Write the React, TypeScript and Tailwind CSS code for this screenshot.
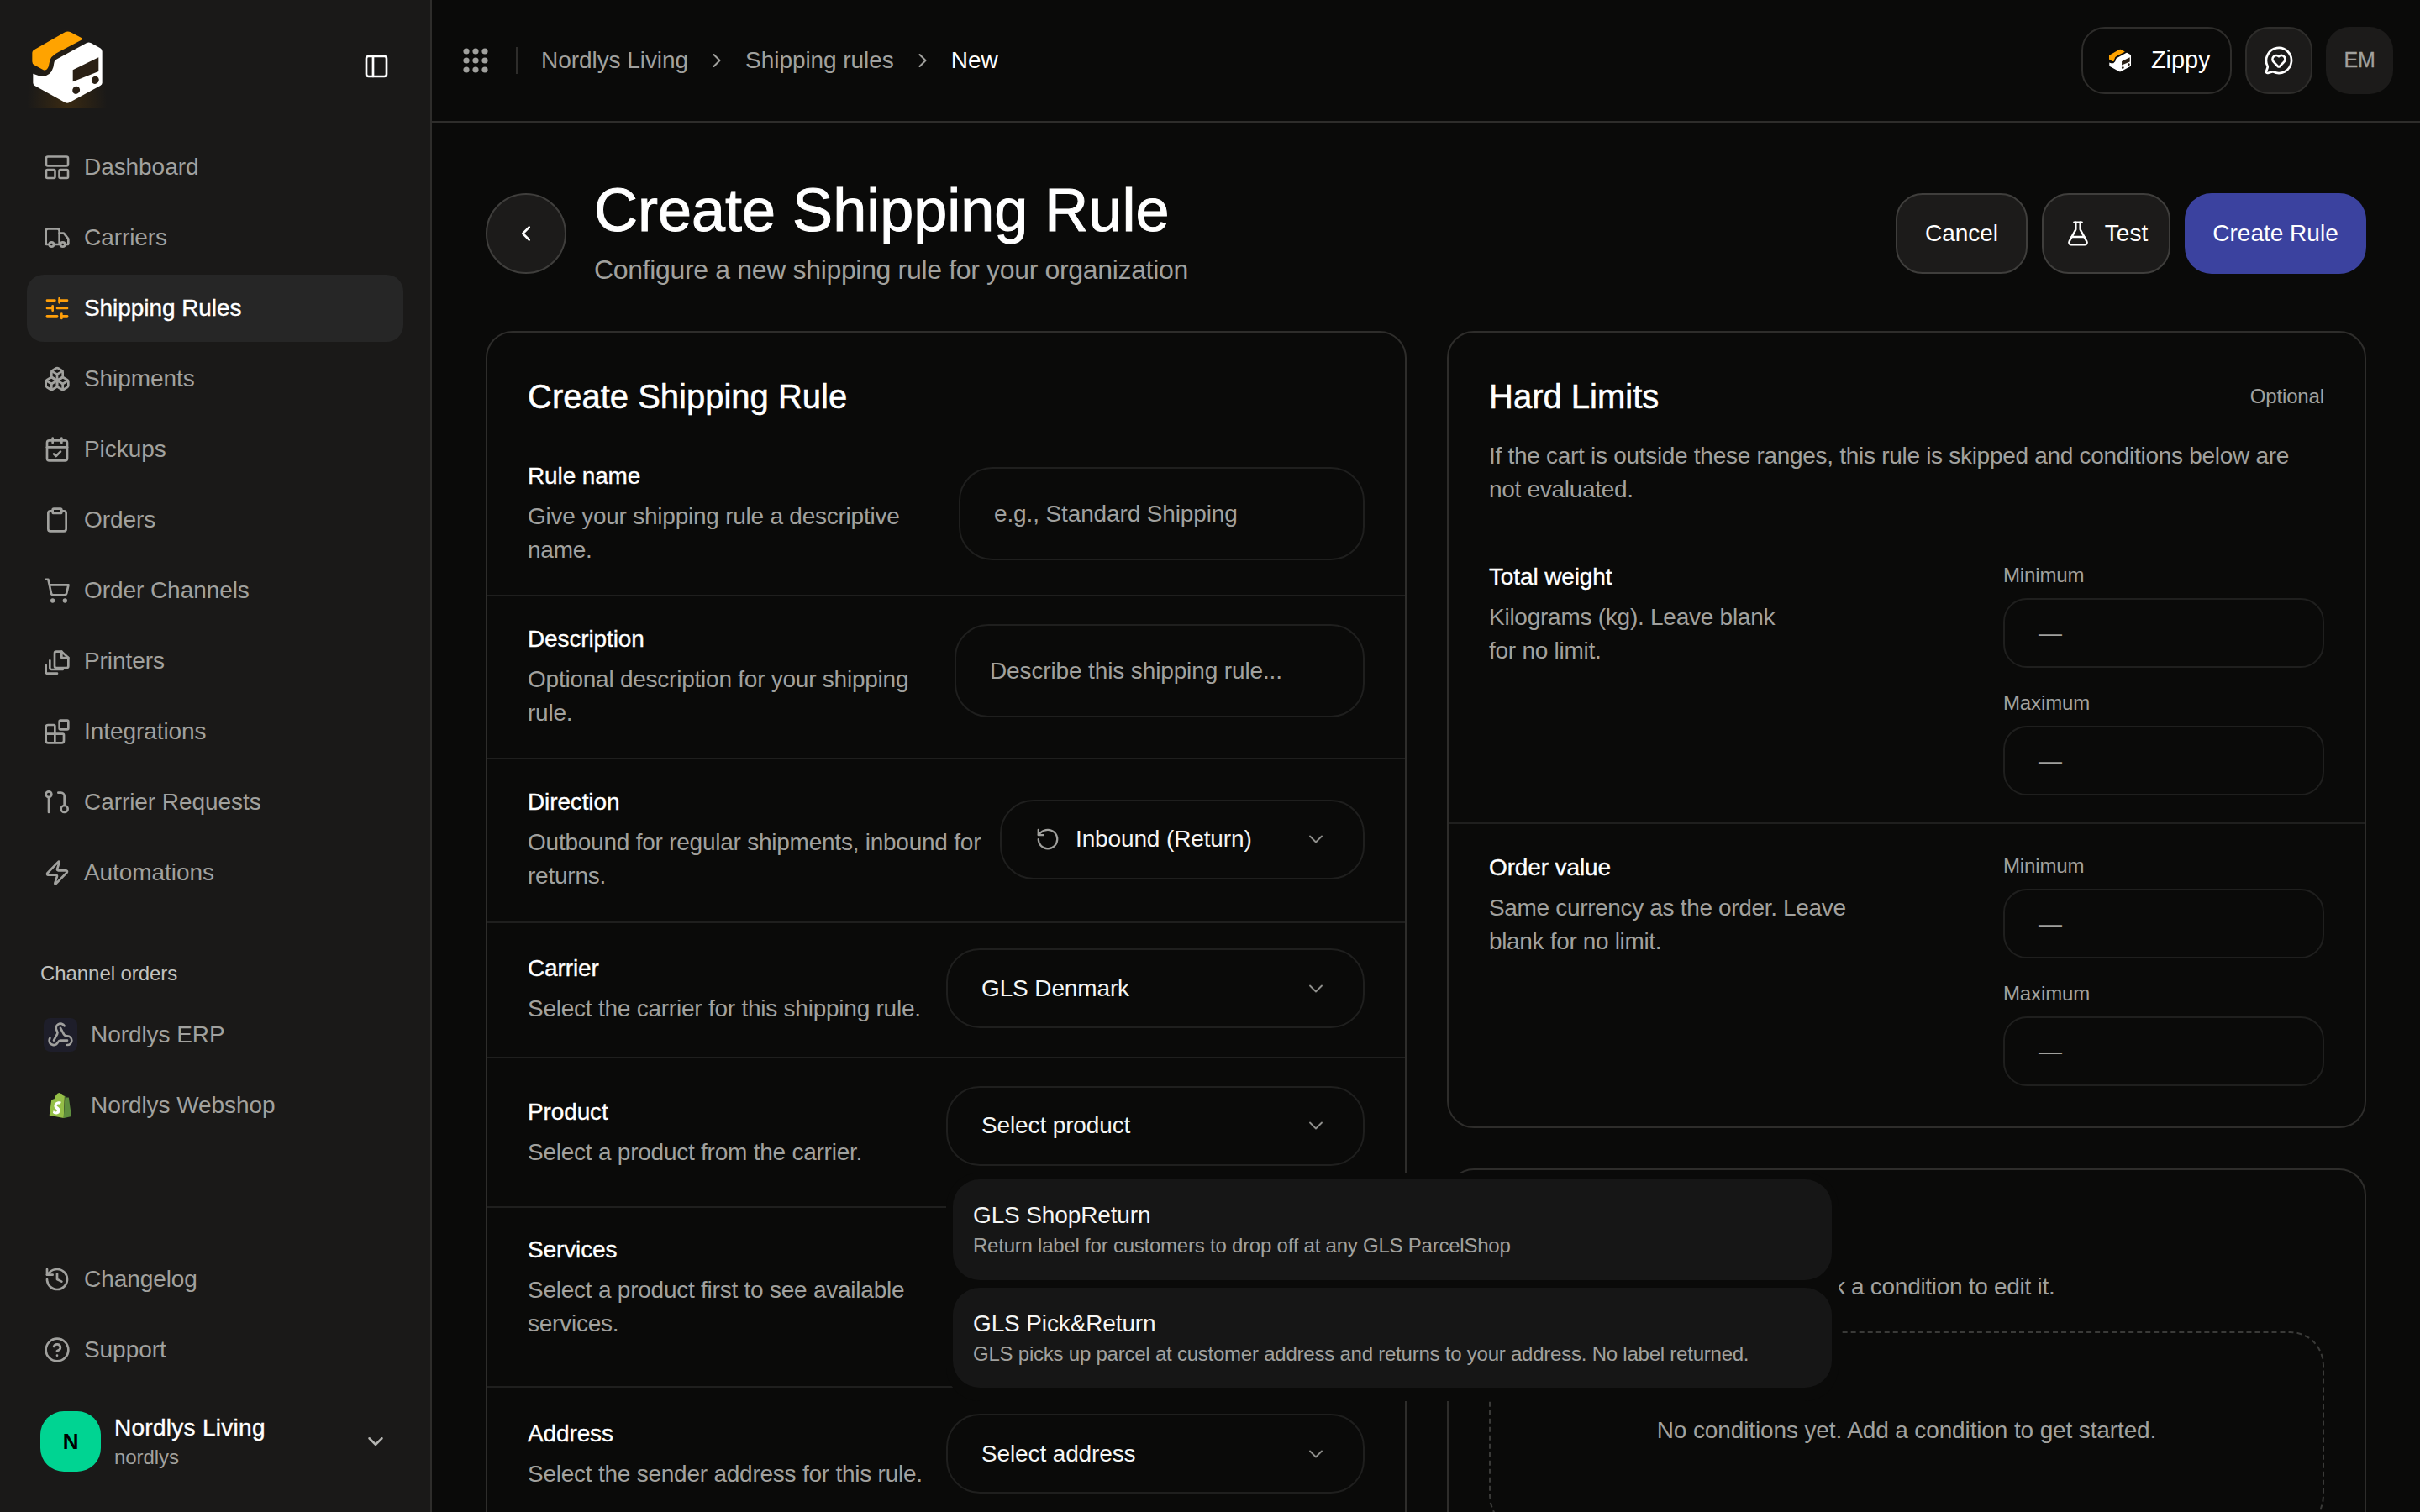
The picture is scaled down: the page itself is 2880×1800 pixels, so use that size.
import React from "react";
import {
  Truck, SlidersHorizontal, Boxes, CalendarCheck, Clipboard, ShoppingCart, Blocks, Zap,
  History, CircleHelp, ChevronDown, ChevronRight, ChevronLeft, PanelLeft, RotateCcw, FlaskConical,
  MessageCircleHeart, Webhook,
} from "lucide-react";

const Logo = ({ className }: { className: string }) => (
  <svg viewBox="36 36 288 288" className={className}>
    <path d="M62 118 L172 55 Q182 50 192 55 L232 76 Q236 80 230 83 L150 125 Q118 140 116 165 Q112 195 95 190 L62 172 Q55 168 55 160 L55 128 Q55 122 62 118 Z" fill="#ffa300" />
    <path d="M58 203 Q85 215 105 210 Q130 200 133 165 Q134 155 145 150 L250 93 Q257 90 264 93 L298 112 Q305 116 305 124 L305 236 Q305 242 298 246 L188 306 Q180 310 172 306 L64 246 Q58 242 58 236 Z" fill="#fff" />
    <path d="M200 190 L292 145 L292 195 L200 232 Z" fill="#2a2015" />
    <ellipse cx="212" cy="262" rx="13" ry="14" fill="#2a2015" transform="rotate(35 212 262)" />
    <ellipse cx="280" cy="226" rx="13" ry="14" fill="#2a2015" transform="rotate(35 280 226)" />
  </svg>
);

const DashIcon = () => (
  <svg viewBox="0 0 32 32" className="w-8 h-8" fill="none" stroke="currentColor" strokeWidth="2.6" strokeLinejoin="round">
    <rect x="3" y="3.5" width="26" height="11" rx="2" />
    <rect x="3" y="19" width="10.5" height="10" rx="1.5" />
    <rect x="18.5" y="19" width="10.5" height="10" rx="1.5" />
  </svg>
);

const ReqIcon = () => (
  <svg viewBox="0 0 24 24" className="w-8 h-8" fill="none" stroke="currentColor" strokeWidth="2" strokeLinecap="round" strokeLinejoin="round">
    <circle cx="4.5" cy="5" r="2.5" />
    <path d="M4.5 7.5V21" />
    <path d="M13 3.5h2.5a3 3 0 0 1 3 3V15" />
    <circle cx="18.5" cy="18" r="3" />
  </svg>
);

const PrinterIcon = () => (
  <svg viewBox="0 0 24 24" className="w-8 h-8" fill="none" stroke="currentColor" strokeWidth="2" strokeLinecap="round" strokeLinejoin="round">
    <path d="M9.75 5a1.5 1.5 0 0 1 1.5-1.5H16l6 5.5v7.5a1.5 1.5 0 0 1-1.5 1.5h-9.25a1.5 1.5 0 0 1-1.5-1.5Z" />
    <path d="M16 3.5V9h6" />
    <path d="M5.5 11.5V18A1.5 1.5 0 0 0 7 19.5h10" />
    <path d="M2 15.5v6A1.5 1.5 0 0 0 3.5 23H12" />
  </svg>
);

const Shopify = () => (
  <svg viewBox="0 0 24 24" className="w-[30px] h-[30px]">
    <path d="M15.009 24 1.448 21.453s1.755-13.601 1.83-14.063c.078-.638.097-.657.772-.87.097-.038.966-.309 2.16-.674C6.675 3.877 8.159 0 11.265 0c.404 0 .87.209 1.11.71h.115c1.332 0 2.085 1.137 2.508 2.37l1.002-.29L15.936 2.834Z" fill="#95bf47" />
    <path d="M15.337 23.979l7.216-1.561s-2.604-17.613-2.625-17.73c-.018-.116-.114-.192-.211-.192s-1.929-.136-1.929-.136-1.275-1.274-1.439-1.411L15 24Z" fill="#5e8e3e" />
    <path d="M11.71 11.305s-.81-.424-1.774-.424c-1.447 0-1.504.906-1.504 1.141 0 1.232 3.24 1.715 3.24 4.629 0 2.295-1.44 3.76-3.406 3.76-2.354 0-3.54-1.465-3.54-1.465l.646-2.086s1.245 1.066 2.28 1.066c.675 0 .975-.545.975-.932 0-1.619-2.654-1.694-2.654-4.359-.034-2.237 1.571-4.416 4.827-4.416 1.257 0 1.875.361 1.875.361l-.945 2.715Z" fill="#fff" />
  </svg>
);

const nav: [string, React.ReactNode][] = [
  ["Dashboard", <DashIcon />],
  ["Carriers", <Truck size={32} strokeWidth={2} />],
  ["Shipping Rules", <SlidersHorizontal size={32} strokeWidth={2} className="text-[#ff9f0a]" />],
  ["Shipments", <Boxes size={32} strokeWidth={2} />],
  ["Pickups", <CalendarCheck size={32} strokeWidth={2} />],
  ["Orders", <Clipboard size={32} strokeWidth={2} />],
  ["Order Channels", <ShoppingCart size={32} strokeWidth={2} />],
  ["Printers", <PrinterIcon />],
  ["Integrations", <Blocks size={32} strokeWidth={2} />],
  ["Carrier Requests", <ReqIcon />],
  ["Automations", <Zap size={32} strokeWidth={2} />],
];

const NavItem = ({ label, icon, active }: { label: string; icon: React.ReactNode; active?: boolean }) => (
  <div className={`h-20 w-full rounded-[20px] pl-5 flex items-center gap-4 text-[28px] ${active ? "bg-[#262626] text-white [-webkit-text-stroke:0.4px_currentColor]" : "text-[#a1a19e]"}`}>
    <span className="w-8 h-8 flex items-center justify-center shrink-0 [-webkit-text-stroke:0]">{icon}</span>
    <span>{label}</span>
  </div>
);

const Sidebar = () => (
  <aside className="w-[514px] h-full shrink-0 bg-[#1a1918] border-r-2 border-[#2e2d2b] px-8 flex flex-col tracking-[-0.004em]">
    <div className="h-[159px] pt-8 flex items-start justify-between">
      <div className="w-24 h-24 bg-[radial-gradient(ellipse_at_50%_100%,#3a2a12_0%,#1a1918_70%)]">
        <Logo className="w-24 h-24" />
      </div>
      <PanelLeft size={32} strokeWidth={2} className="text-white mt-[31px] mr-[16px]" />
    </div>
    <nav className="flex flex-col gap-1">
      {nav.map(([l, i]) => (
        <NavItem key={l} label={l} icon={i} active={l === "Shipping Rules"} />
      ))}
    </nav>
    <div className="mt-[64px] mb-[17px] pl-4 text-[24px] leading-8 text-[#c2c2be]">Channel orders</div>
    <div className="flex flex-col gap-1">
      <div className="h-20 pl-5 flex items-center gap-4 text-[28px] text-[#a1a19e]">
        <span className="w-10 h-10 rounded-lg bg-[#1e1e2a] flex items-center justify-center"><Webhook size={32} strokeWidth={2} /></span>
        <span>Nordlys ERP</span>
      </div>
      <div className="h-20 pl-5 flex items-center gap-4 text-[28px] text-[#a1a19e]">
        <span className="w-10 h-10 flex items-center justify-center"><Shopify /></span>
        <span>Nordlys Webshop</span>
      </div>
    </div>
    <div className="mt-auto flex flex-col gap-1">
      <NavItem label="Changelog" icon={<History size={32} strokeWidth={2} />} />
      <NavItem label="Support" icon={<CircleHelp size={32} strokeWidth={2} />} />
    </div>
    <div className="mt-[33px] mb-12 pl-4 pr-[18px] flex items-center gap-4">
      <div className="w-[72px] h-[72px] rounded-[28px] bg-[#00d492] flex items-center justify-center text-[26px] font-bold text-black">N</div>
      <div className="flex-1">
        <div className="text-[28px] leading-9 tracking-[0.01em] text-white [-webkit-text-stroke:0.4px_currentColor]">Nordlys Living</div>
        <div className="mt-px text-[24px] leading-8 text-[#a1a19e]">nordlys</div>
      </div>
      <ChevronDown size={30} strokeWidth={2} className="text-[#b5b5b2]" />
    </div>
  </aside>
);

const Header = () => (
  <header className="h-[146px] shrink-0 border-b-2 border-[#2e2d2b] pl-[37px] pr-8 flex items-center justify-between">
    <div className="flex items-center">
      <svg viewBox="0 0 30 30" className="w-[30px] h-[30px] text-[#a1a19e]" fill="currentColor">
        {[4, 15, 26].flatMap((y) => [4, 15, 26].map((x) => <circle key={`${x}${y}`} cx={x} cy={y} r="3.6" />))}
      </svg>
      <div className="w-0.5 h-8 bg-[#2e2d2b] ml-[33px] mr-7" />
      <div className="flex items-center gap-5 text-[28px] tracking-[-0.002em] text-[#a1a19e]">
        <span>Nordlys Living</span>
        <ChevronRight size={28} strokeWidth={1.8} />
        <span>Shipping rules</span>
        <ChevronRight size={28} strokeWidth={1.8} />
        <span className="text-white">New</span>
      </div>
    </div>
    <div className="flex items-center gap-4">
      <div className="w-[179px] h-20 rounded-[28px] border-2 border-[#2e2d2b] pl-[29px] flex items-center gap-[22px] text-[29px] text-white">
        <Logo className="w-[30px] h-[30px]" />
        <span>Zippy</span>
      </div>
      <div className="w-20 h-20 rounded-[28px] bg-[#1c1b1a] border-2 border-[#2e2d2b] flex items-center justify-center text-white">
        <MessageCircleHeart size={36} strokeWidth={1.8} />
      </div>
      <div className="w-20 h-20 rounded-[28px] bg-[#1c1b1a] flex items-center justify-center text-[25px] text-[#a1a19e] [-webkit-text-stroke:0.3px_currentColor]">EM</div>
    </div>
  </header>
);

const Row = ({ label, desc, children, className }: { label: string; desc: React.ReactNode; children?: React.ReactNode; className: string }) => (
  <div className={`flex items-center justify-between px-12 ${className}`}>
    <div className="whitespace-nowrap">
      <div className="text-[28px] leading-10 text-white [-webkit-text-stroke:0.35px_currentColor]">{label}</div>
      <div className="mt-2 text-[28px] leading-10 tracking-[-0.0085em] text-[#a1a19e]">{desc}</div>
    </div>
    {children}
  </div>
);

const Field = ({ children, className }: { children: React.ReactNode; className: string }) => (
  <div className={`shrink-0 rounded-[40px] border-2 border-[#1f1f1e] flex items-center text-[28px] ${className}`}>{children}</div>
);

const Select = ({ text, className, icon }: { text: string; className: string; icon?: React.ReactNode }) => (
  <Field className={`h-[95px] pl-10 pr-[42px] justify-between text-[#f5f5f4] ${className}`}>
    <span className="flex items-center gap-[18px]">{icon}{text}</span>
    <ChevronDown size={28} strokeWidth={1.6} className="text-[#8f8f8c]" />
  </Field>
);

const Limit = ({ label, className }: { label: string; className?: string }) => (
  <div className={className}>
    <div className="mt-0.5 text-[24px] leading-8 text-[#a1a19e]">{label}</div>
    <div className="mt-[11px] w-[382px] h-[83px] rounded-[28px] border-2 border-[#1f1f1e] pl-10 flex items-center text-[28px] text-[#a1a19e]">—</div>
  </div>
);

const Popover = () => (
  <div className="absolute left-[1126px] top-[1396px] w-[1062px] h-[272px] rounded-[40px] bg-[#0a0a09] p-2 flex flex-col gap-[9px]">
    {[
      ["GLS ShopReturn", "Return label for customers to drop off at any GLS ParcelShop"],
      ["GLS Pick&Return", "GLS picks up parcel at customer address and returns to your address. No label returned."],
    ].map(([t, d]) => (
      <div key={t} className="h-[119.5px] rounded-[32px] bg-[#161616] px-6 pt-[23px]">
        <div className="text-[28px] leading-10 text-[#f5f5f4]">{t}</div>
        <div className="text-[24px] leading-8 tracking-[-0.0095em] text-[#a1a19e]">{d}</div>
      </div>
    ))}
  </div>
);

export default function App() {
  return (
    <div className="relative w-[2880px] h-[1800px] overflow-hidden flex bg-[#0a0a09] tracking-[-0.008em] font-['Liberation_Sans',sans-serif]">
      <Sidebar />
      <main className="flex-1 min-w-0 h-full flex flex-col">
        <Header />
        <div className="px-16 pt-16">
          <div className="flex items-center justify-between">
            <div className="flex items-center gap-[33px]">
              <div className="w-24 h-24 rounded-full bg-[#1c1b1a] border-2 border-[#3f3e3c] flex items-center justify-center text-white">
                <ChevronLeft size={30} strokeWidth={2} />
              </div>
              <div>
                <h1 className="text-[72px] leading-20 tracking-normal text-white [-webkit-text-stroke:1px_currentColor]">Create Shipping Rule</h1>
                <p className="mt-[7px] text-[32px] leading-12 tracking-[-0.0105em] text-[#a1a19e]">Configure a new shipping rule for your organization</p>
              </div>
            </div>
            <div className="flex items-center gap-[17px] text-[28px] tracking-normal text-white">
              <div className="w-[157px] h-24 rounded-[32px] bg-[#1c1b1a] border-2 border-[#3f3e3c] flex items-center justify-center">Cancel</div>
              <div className="w-[153px] h-24 rounded-[32px] bg-[#1c1b1a] border-2 border-[#3f3e3c] flex items-center justify-center gap-4">
                <FlaskConical size={32} strokeWidth={1.8} />
                <span>Test</span>
              </div>
              <div className="w-[216px] h-24 rounded-[32px] bg-[#3b429f] flex items-center justify-center">Create Rule</div>
            </div>
          </div>
          <div className="mt-[49px] grid grid-cols-[1096px_1094px] gap-12 items-start">
            <section className="rounded-t-[32px] border-2 border-b-0 border-[#2e2d2b]">
              <h2 className="px-12 pt-12 text-[40px] leading-14 tracking-normal text-white [-webkit-text-stroke:0.5px_currentColor]">Create Shipping Rule</h2>
              <div className="mt-[17px]" />
              <Row className="pt-[30px] pb-[33px]" label="Rule name" desc={<>Give your shipping rule a descriptive<br />name.</>}>
                <Field className="w-[483px] h-[111px] pl-10 pt-0.5 text-[#a1a19e]">e.g., Standard Shipping</Field>
              </Row>
              <Row className="pt-[31px] pb-[33px] border-t-2 border-[#1f1f1e]" label="Description" desc={<>Optional description for your shipping<br />rule.</>}>
                <div className="mb-[14px]"><Field className="w-[488px] h-[111px] pl-10 pt-0.5 text-[#a1a19e]">Describe this shipping rule...</Field></div>
              </Row>
              <Row className="pt-[31px] pb-[34px] border-t-2 border-[#1f1f1e]" label="Direction" desc={<>Outbound for regular shipments, inbound for<br />returns.</>}>
                <Select className="w-[434px]" text="Inbound (Return)" icon={<RotateCcw size={30} strokeWidth={1.8} className="text-[#a1a19e]" />} />
              </Row>
              <Row className="pt-[30px] pb-[34px] border-t-2 border-[#1f1f1e]" label="Carrier" desc="Select the carrier for this shipping rule.">
                <Select className="w-[498px]" text="GLS Denmark" />
              </Row>
              <Row className="pt-[32px] pb-[32px] h-[178px] border-t-2 border-[#1f1f1e]" label="Product" desc="Select a product from the carrier.">
                <div className="mb-4"><Select className="w-[498px]" text="Select product" /></div>
              </Row>
              <Row className="pt-[30px] pb-[54px] border-t-2 border-[#1f1f1e]" label="Services" desc={<>Select a product first to see available<br />services.</>} />
              <Row className="pt-[31px] pb-[34px] border-t-2 border-[#1f1f1e]" label="Address" desc="Select the sender address for this rule.">
                <Select className="w-[498px]" text="Select address" />
              </Row>
            </section>
            <div className="flex flex-col gap-12">
              <section className="rounded-[32px] border-2 border-[#2e2d2b] pb-12">
                <div className="px-12 pt-12 flex items-center justify-between">
                  <h2 className="text-[40px] leading-14 tracking-normal text-white [-webkit-text-stroke:0.5px_currentColor]">Hard Limits</h2>
                  <span className="text-[24px] text-[#a1a19e]">Optional</span>
                </div>
                <p className="px-12 mt-[23px] text-[28px] leading-10 tracking-[-0.0104em] text-[#a1a19e]">
                  If the cart is outside these ranges, this rule is skipped and conditions below are<br />not evaluated.
                </p>
                <div className="mt-16 px-12 pb-8 flex justify-between border-b-2 border-[#1f1f1e]">
                  <div>
                    <div className="text-[28px] leading-10 text-white [-webkit-text-stroke:0.35px_currentColor]">Total weight</div>
                    <div className="mt-2 text-[28px] leading-10 tracking-[-0.009em] text-[#a1a19e]">Kilograms (kg). Leave blank<br />for no limit.</div>
                  </div>
                  <div className="flex flex-col gap-6">
                    <Limit label="Minimum" />
                    <Limit label="Maximum" />
                  </div>
                </div>
                <div className="pt-[32px] px-12 flex justify-between">
                  <div>
                    <div className="text-[28px] leading-10 text-white [-webkit-text-stroke:0.35px_currentColor]">Order value</div>
                    <div className="mt-2 text-[28px] leading-10 tracking-[-0.012em] text-[#a1a19e]">Same currency as the order. Leave<br />blank for no limit.</div>
                  </div>
                  <div className="flex flex-col gap-6">
                    <Limit label="Minimum" />
                    <Limit label="Maximum" />
                  </div>
                </div>
              </section>
              <section className="rounded-t-[32px] border-2 border-b-0 border-[#2e2d2b] px-12 pt-12 pb-12">
                <h2 className="text-[40px] leading-14 tracking-normal text-white [-webkit-text-stroke:0.5px_currentColor]">Conditions</h2>
                <p className="mt-[15px] text-[28px] leading-10 tracking-[-0.0105em] text-[#a1a19e]">Define when this rule applies. Click a condition to edit it.</p>
                <div className="mt-[33px] h-[236px] rounded-[40px] border-2 border-dashed border-[#3a3a38] flex items-center justify-center text-[28px] text-[#a1a19e]">
                  No conditions yet. Add a condition to get started.
                </div>
              </section>
            </div>
          </div>
        </div>
      </main>
      <Popover />
    </div>
  );
}
